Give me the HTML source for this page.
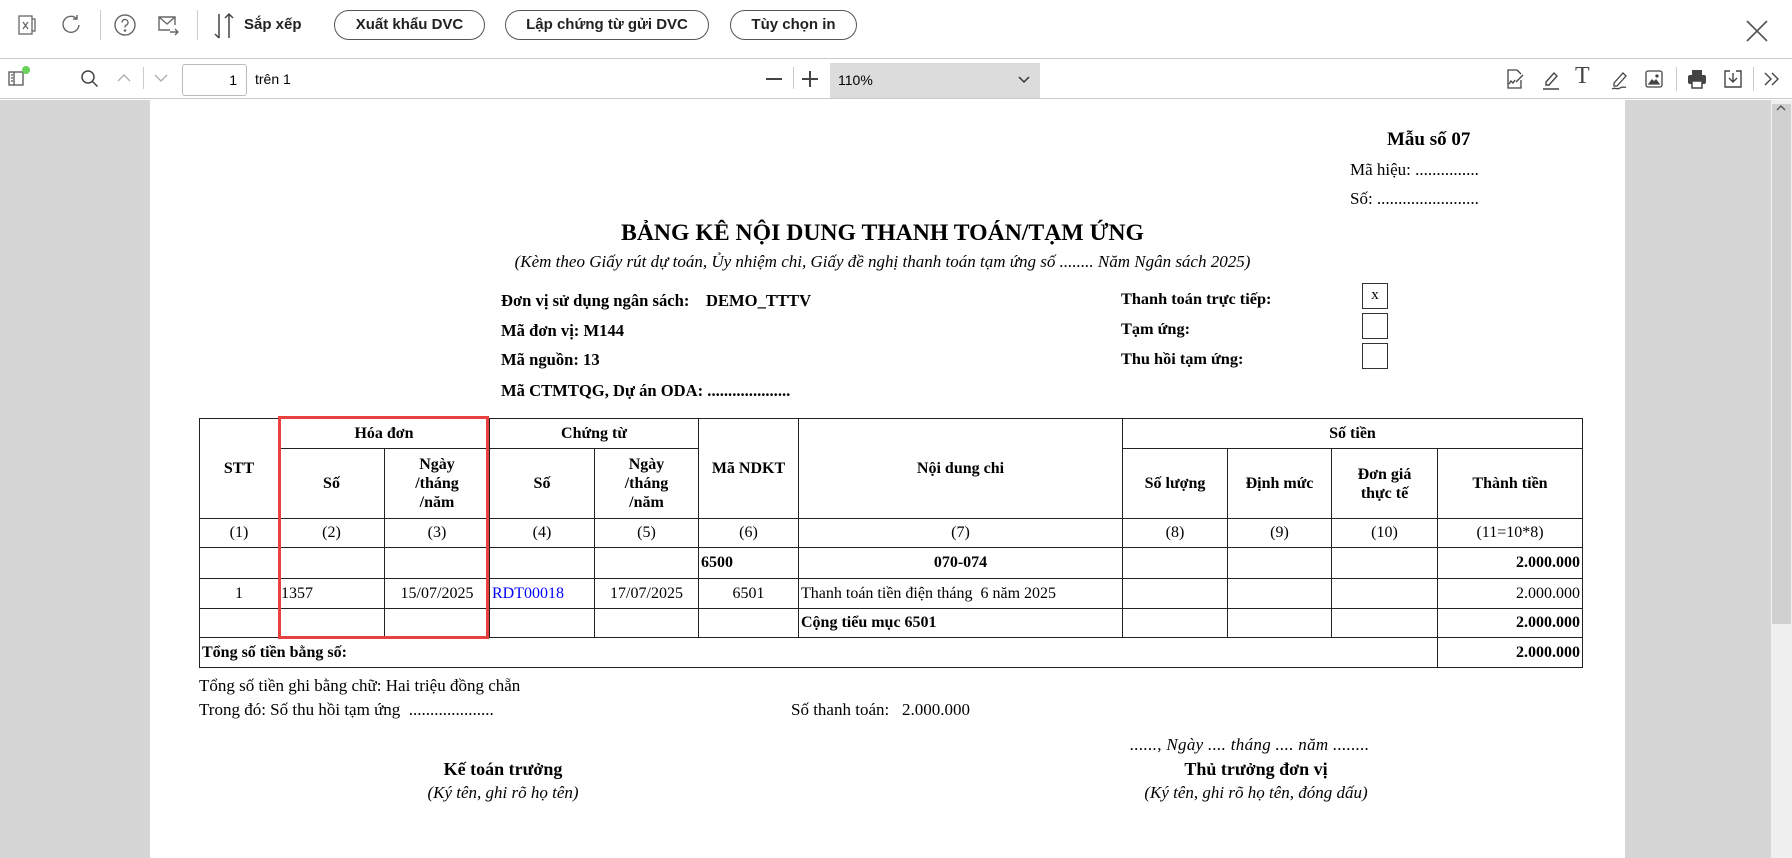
<!DOCTYPE html>
<html><head><meta charset="utf-8"><style>
*{margin:0;padding:0;box-sizing:border-box}
body{width:1792px;height:858px;overflow:hidden;background:#fff;font-family:"Liberation Sans",sans-serif;position:relative}
.a{position:absolute;white-space:nowrap}
.tb1{position:absolute;left:0;top:0;width:1792px;height:59px;border-bottom:1px solid #c8c8d0;background:#fff}
.tb2{position:absolute;left:0;top:59px;width:1792px;height:40px;border-bottom:1px solid #c8c8d0;background:#fff}
.btn{position:absolute;top:10px;height:30px;border:1px solid #555;border-radius:15px;font-size:15px;font-weight:bold;color:#222;text-align:center;line-height:28px;transform-origin:center}
.sep{position:absolute;width:1px;background:#ccc}
.gray{position:absolute;top:100px;left:0;width:1792px;height:758px;background:#d6d6d6}
.page{position:absolute;left:150px;top:100px;width:1475px;height:758px;background:#fff;font-family:"Liberation Serif",serif;color:#000}
table{position:absolute;left:49px;top:318px;border-collapse:collapse;table-layout:fixed;font-family:"Liberation Serif",serif;font-size:16px}
td{border:1.5px solid #222;text-align:center;padding:0 2px;overflow:hidden;white-space:nowrap}
.b{font-weight:bold}
.dotb td{border-bottom:1px dotted #555}
.r{text-align:right}.l{text-align:left}
.cb{position:absolute;width:26px;height:26px;border:1.5px solid #333;font-size:15px;text-align:center;line-height:22px}
</style></head><body>
<div class="tb1">
 <svg class="a" style="left:16px;top:14px" width="22" height="22" viewBox="0 0 22 22" fill="none" stroke="#666" stroke-width="1.3"><rect x="3" y="2" width="13" height="18"/><path d="M16 5h3v12h-3M7 8l5 7M12 8l-5 7"/></svg>
 <svg class="a" style="left:60px;top:13px" width="22" height="22" viewBox="0 0 22 22" fill="none" stroke="#666" stroke-width="1.4"><path d="M17 6A8 8 0 1 0 19 12M17 2v4h-4"/></svg>
 <div class="sep" style="left:100px;top:10px;height:30px"></div>
 <svg class="a" style="left:113px;top:13px" width="24" height="24" viewBox="0 0 24 24" fill="none" stroke="#666" stroke-width="1.4"><circle cx="12" cy="12" r="10"/><path d="M9 9.5a3 3 0 1 1 4 2.8c-1 .4-1 1-1 2.2"/><circle cx="12" cy="17.5" r=".6" fill="#666"/></svg>
 <svg class="a" style="left:156px;top:14px" width="24" height="22" viewBox="0 0 24 22" fill="none" stroke="#666" stroke-width="1.4"><path d="M14 16H3V3h16v8M3 3l8 7 8-7M14 18h8M19 15l3 3-3 3"/></svg>
 <div class="sep" style="left:197px;top:10px;height:30px"></div>
 <svg class="a" style="left:212px;top:12px" width="24" height="28" viewBox="0 0 24 28" fill="none" stroke="#444" stroke-width="1.5"><path d="M7 2v24M3 22l4 4M17 26V2M13 6l4-4 4 4"/></svg>
 <div class="a" style="left:244px;top:16px;font-size:15px;font-weight:bold;color:#222">Sắp xếp</div>
 <div class="btn" style="left:334px;width:151px">Xuất khẩu DVC</div>
 <div class="btn" style="left:505px;width:204px">Lập chứng từ gửi DVC</div>
 <div class="btn" style="left:730px;width:127px">Tùy chọn in</div>
 <svg class="a" style="left:1745px;top:19px" width="24" height="24" viewBox="0 0 24 24" stroke="#555" stroke-width="1.6"><path d="M2 2l20 20M22 2L2 22"/></svg>
</div>
<div class="tb2">
 <svg class="a" style="left:6px;top:6px" width="26" height="24" viewBox="0 0 26 24" fill="none" stroke="#555" stroke-width="1.3"><rect x="3" y="7" width="14" height="13"/><path d="M8 7v13M5 10h2M5 13h2M5 16h2"/><circle cx="20" cy="5" r="4" fill="#6ad15a" stroke="none"/></svg>
 <svg class="a" style="left:80px;top:10px" width="20" height="20" viewBox="0 0 20 20" fill="none" stroke="#444" stroke-width="1.5"><circle cx="8" cy="8" r="6"/><path d="M12.5 12.5l5 5"/></svg>
 <svg class="a" style="left:117px;top:14px" width="14" height="10" viewBox="0 0 14 10" fill="none" stroke="#aaa" stroke-width="1.3"><path d="M1 8l6-6 6 6"/></svg>
 <div class="sep" style="left:143px;top:8px;height:22px"></div>
 <svg class="a" style="left:154px;top:14px" width="14" height="10" viewBox="0 0 14 10" fill="none" stroke="#aaa" stroke-width="1.3"><path d="M1 2l6 6 6-6"/></svg>
 <div class="a" style="left:182px;top:5px;width:65px;height:32px;border:1px solid #bbb;border-radius:3px;font-size:14px;text-align:right;padding-right:9px;line-height:30px">1</div>
 <div class="a" style="left:255px;top:12px;font-size:14px">trên 1</div>
 <div class="a" style="left:766px;top:19px;width:16px;height:1.5px;background:#444"></div>
 <div class="sep" style="left:793px;top:8px;height:22px"></div>
 <div class="a" style="left:802px;top:19px;width:16px;height:1.5px;background:#444"></div>
 <div class="a" style="left:809px;top:12px;width:1.5px;height:16px;background:#444"></div>
 <div class="a" style="left:830px;top:4px;width:210px;height:35px;background:#dcdcdc;font-size:14px;padding-left:8px;line-height:35px">110%</div>
 <svg class="a" style="left:1018px;top:17px" width="12" height="8" viewBox="0 0 12 8" fill="none" stroke="#333" stroke-width="1.5"><path d="M1 1l5 5 5-5"/></svg>
 <svg class="a" style="left:1505px;top:10px" width="20" height="20" viewBox="0 0 20 20" fill="none" stroke="#444" stroke-width="1.3"><path d="M12 1H3v18h13v-8M12 1l4 4M4 15l2-3 2 2 2-3M11 13l7-7"/></svg>
 <svg class="a" style="left:1541px;top:10px" width="20" height="22" viewBox="0 0 20 22" fill="none" stroke="#444" stroke-width="1.4"><path d="M5 13l8-9 3 3-8 9H5zM2 20h16"/></svg>
 <div class="a" style="left:1575px;top:4px;font-family:'Liberation Serif';font-size:24px;color:#444">T</div>
 <svg class="a" style="left:1610px;top:10px" width="20" height="22" viewBox="0 0 20 22" fill="none" stroke="#444" stroke-width="1.3"><path d="M4 14l9-10 3 3-9 10H4zM2 20c3-2 5 1 8-1s4 0 6-1"/></svg>
 <svg class="a" style="left:1645px;top:11px" width="18" height="18" viewBox="0 0 18 18" fill="none" stroke="#444" stroke-width="1.3"><rect x="1" y="1" width="16" height="16" rx="2"/><path d="M4 14l3-4 2 2 2-2 3 4z" fill="#444"/><circle cx="12" cy="6" r="1" fill="#444"/></svg>
 <div class="sep" style="left:1676px;top:8px;height:24px"></div>
 <svg class="a" style="left:1687px;top:10px" width="20" height="20" viewBox="0 0 20 20" fill="#444"><rect x="5" y="1" width="10" height="5"/><rect x="1" y="6" width="18" height="9" rx="2"/><rect x="5" y="12" width="10" height="7" fill="#fff" stroke="#444" stroke-width="1.5"/></svg>
 <svg class="a" style="left:1723px;top:10px" width="20" height="20" viewBox="0 0 20 20" fill="none" stroke="#444" stroke-width="1.4"><path d="M7 2H2v16h16V2h-5M10 4v9M6 9l4 4 4-4"/></svg>
 <div class="sep" style="left:1753px;top:8px;height:24px"></div>
 <svg class="a" style="left:1763px;top:12px" width="18" height="16" viewBox="0 0 18 16" fill="none" stroke="#444" stroke-width="1.4"><path d="M2 2l6 6-6 6M9 2l6 6-6 6"/></svg>
</div>
<div class="gray"></div>
<div class="a" style="left:1771px;top:100px;width:21px;height:758px;background:#f0f0f0"></div>
<div class="a" style="left:1772px;top:104px;width:19px;height:520px;background:#d0d0d0"></div>
<svg class="a" style="left:1776px;top:104px" width="10" height="8" viewBox="0 0 10 8" fill="none" stroke="#555" stroke-width="1.4"><path d="M1 6l4-4 4 4"/></svg>
<div class="page">
 <div class="a b" style="left:1237px;top:29px;font-size:19px">Mẫu số 07</div>
 <div class="a" style="left:1200px;top:60px;font-size:17px">Mã hiệu: ...............</div>
 <div class="a" style="left:1200px;top:89px;font-size:17px">Số: ........................</div>
 <div class="a b" style="left:0;width:1475px;text-align:center;top:120px;font-size:23.7px;padding-right:10px">BẢNG KÊ NỘI DUNG THANH TOÁN/TẠM ỨNG</div>
 <div class="a" style="left:0;width:1475px;text-align:center;top:152px;font-size:17px;font-style:italic;padding-right:10px">(Kèm theo Giấy rút dự toán, Ủy nhiệm chi, Giấy đề nghị thanh toán tạm ứng số ........ Năm Ngân sách 2025)</div>
 <div class="a b" style="left:351px;top:191px;font-size:16.6px">Đơn vị sử dụng ngân sách:&nbsp;&nbsp;&nbsp;&nbsp;DEMO_TTTV</div>
 <div class="a b" style="left:351px;top:221px;font-size:16.6px">Mã đơn vị: M144</div>
 <div class="a b" style="left:351px;top:250px;font-size:16.6px">Mã nguồn: 13</div>
 <div class="a b" style="left:351px;top:281px;font-size:16.6px">Mã CTMTQG, Dự án ODA: ....................</div>
 <div class="a b" style="left:971px;top:189px;font-size:16.3px">Thanh toán trực tiếp:</div>
 <div class="a b" style="left:971px;top:219px;font-size:16.3px">Tạm ứng:</div>
 <div class="a b" style="left:971px;top:249px;font-size:16.3px">Thu hồi tạm ứng:</div>
 <div class="cb" style="left:1212px;top:183px">x</div>
 <div class="cb" style="left:1212px;top:213px"></div>
 <div class="cb" style="left:1212px;top:243px"></div>
 <table>
  <colgroup><col style="width:79px"><col style="width:106px"><col style="width:105px"><col style="width:105px"><col style="width:104px"><col style="width:100px"><col style="width:324px"><col style="width:105px"><col style="width:104px"><col style="width:106px"><col style="width:145px"></colgroup>
  <tr style="height:30px" class="b"><td rowspan="2">STT</td><td colspan="2">Hóa đơn</td><td colspan="2">Chứng từ</td><td rowspan="2">Mã NDKT</td><td rowspan="2">Nội dung chi</td><td colspan="4">Số tiền</td></tr>
  <tr style="height:70px" class="b"><td>Số</td><td style="line-height:19px">Ngày<br>/tháng<br>/năm</td><td>Số</td><td style="line-height:19px">Ngày<br>/tháng<br>/năm</td><td>Số lượng</td><td>Định mức</td><td style="line-height:19px">Đơn giá<br>thực tế</td><td>Thành tiền</td></tr>
  <tr style="height:29px"><td>(1)</td><td>(2)</td><td>(3)</td><td>(4)</td><td>(5)</td><td>(6)</td><td>(7)</td><td>(8)</td><td>(9)</td><td>(10)</td><td>(11=10*8)</td></tr>
  <tr style="height:31px" class="dotb"><td></td><td></td><td></td><td></td><td></td><td class="l b">6500</td><td class="b">070-074</td><td></td><td></td><td></td><td class="r b">2.000.000</td></tr>
  <tr style="height:30px" class="dotb"><td>1</td><td class="l">1357</td><td>15/07/2025</td><td class="l" style="color:#00f">RDT00018</td><td>17/07/2025</td><td>6501</td><td class="l">Thanh toán tiền điện tháng&nbsp; 6 năm 2025</td><td></td><td></td><td></td><td class="r">2.000.000</td></tr>
  <tr style="height:29px"><td></td><td></td><td></td><td></td><td></td><td></td><td class="l b">Cộng tiểu mục 6501</td><td></td><td></td><td></td><td class="r b">2.000.000</td></tr>
  <tr style="height:30px"><td colspan="10" class="l b">Tổng số tiền bằng số:</td><td class="r b">2.000.000</td></tr>
 </table>
 <div class="a" style="left:128px;top:316px;width:211px;height:223px;border:3px solid #e8403f"></div>
 <div class="a" style="left:49px;top:576px;font-size:17px">Tổng số tiền ghi bằng chữ: Hai triệu đồng chẵn</div>
 <div class="a" style="left:49px;top:600px;font-size:17px">Trong đó: Số thu hồi tạm ứng&nbsp; ....................</div>
 <div class="a" style="left:641px;top:600px;font-size:17px">Số thanh toán:&nbsp;&nbsp; 2.000.000</div>
 <div class="a" style="left:980px;top:635px;font-size:17px;font-style:italic;letter-spacing:0.3px">......, Ngày .... tháng .... năm ........</div>
 <div class="a b" style="left:203px;top:659px;width:300px;text-align:center;font-size:18px">Kế toán trưởng</div>
 <div class="a" style="left:203px;top:683px;width:300px;text-align:center;font-size:17px;font-style:italic">(Ký tên, ghi rõ họ tên)</div>
 <div class="a b" style="left:956px;top:659px;width:300px;text-align:center;font-size:18px">Thủ trưởng đơn vị</div>
 <div class="a" style="left:936px;top:683px;width:340px;text-align:center;font-size:17px;font-style:italic">(Ký tên, ghi rõ họ tên, đóng dấu)</div>
</div>
</body></html>
